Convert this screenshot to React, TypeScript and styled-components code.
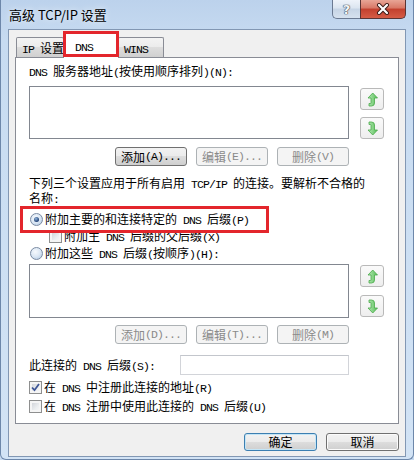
import React from 'react';
import styled, { createGlobalStyle } from 'styled-components';

const GlobalStyle = createGlobalStyle`
  html, body {
    margin: 0;
    padding: 0;
  }
  body {
    width: 414px;
    height: 460px;
    overflow: hidden;
    background: #c6daf0;
    font-family: "Noto Sans CJK SC", sans-serif;
    font-size: 12px;
    color: #000;
  }
`;

const Window = styled.div`
  box-sizing: border-box;
  width: 414px;
  height: 460px;
  display: flex;
  flex-direction: column;
  padding: 0 7px 8px 7px;
  border: 1px solid #6d87aa;
  border-top: none;
  border-radius: 0 0 6px 6px;
  background: linear-gradient(to bottom, #bcd2ec 0, #c7dbf1 40px, #d2e3f5 100%);
`;

const TitleBar = styled.div`
  flex: none;
  height: 29px;
  display: flex;
  align-items: flex-start;
`;

const Title = styled.div`
  margin: 7px 0 0 1px;
  font-size: 13px;
  line-height: 16px;
  text-shadow: 0 0 6px rgba(255, 255, 255, 0.9);
`;

const Caption = styled.div`
  margin-left: auto;
  display: flex;
`;

const HelpButton = styled.div`
  box-sizing: border-box;
  width: 28px;
  height: 19px;
  display: flex;
  align-items: center;
  justify-content: center;
  border: 1px solid #6b7a92;
  border-top: none;
  border-right: none;
  border-radius: 0 0 0 5px;
  background: linear-gradient(to bottom, #eef3fa 0, #dbe5f0 45%, #c6d4e5 50%, #d6e2ef 100%);
  color: #f4f6f8;
  font-family: "DejaVu Sans", sans-serif;
  font-weight: bold;
  font-size: 13px;
  text-shadow: 0 0 1px #3b4250, 0 0 1px #3b4250, 0 0 1px #3b4250;
`;

const CloseButton = styled.div`
  box-sizing: border-box;
  width: 46px;
  height: 19px;
  display: flex;
  align-items: center;
  justify-content: center;
  border: 1px solid #5a3535;
  border-top: none;
  border-radius: 0 0 5px 0;
  background: linear-gradient(to bottom, #e8a596 0, #d87866 45%, #c2402e 50%, #d55c46 100%);
`;

const Client = styled.div`
  flex: 1;
  display: flex;
  flex-direction: column;
  padding: 3px 6px 5px 6px;
  border: 1px solid #8297b3;
  background: #f0f0f0;
`;

const TabStrip = styled.div`
  flex: none;
  height: 24px;
  display: flex;
  align-items: flex-end;
  padding-left: 1px;
`;

const Tab = styled.div<{ $active?: boolean; $w: number }>`
  box-sizing: border-box;
  position: relative;
  width: ${(p) => p.$w}px;
  height: ${(p) => (p.$active ? 25 : 20)}px;
  margin-left: -1px;
  margin-bottom: ${(p) => (p.$active ? -1 : 0)}px;
  padding: ${(p) => (p.$active ? '5px 0 0 11px' : '3px 0 0 5px')};
  border: 1px solid #898c95;
  border-bottom: none;
  border-radius: 2px 2px 0 0;
  line-height: 13px;
  white-space: nowrap;
  z-index: ${(p) => (p.$active ? 2 : 0)};
  background: ${(p) =>
    p.$active ? '#fff' : 'linear-gradient(to bottom, #f3f3f3 0, #ebebeb 50%, #dddddd 50%, #d0d0d0 100%)'};

  &:first-child {
    margin-left: 0;
  }
`;

const Marker = styled.div<{ $l: number; $t: number; $w: number; $h: number }>`
  position: absolute;
  box-sizing: border-box;
  left: ${(p) => p.$l}px;
  top: ${(p) => p.$t}px;
  width: ${(p) => p.$w}px;
  height: ${(p) => p.$h}px;
  border: 3px solid #e3262c;
  z-index: 5;
  pointer-events: none;
`;

const Panel = styled.div`
  flex: none;
  display: flex;
  flex-direction: column;
  padding: 6px 14px 7px 13px;
  border: 1px solid #898c95;
  background: #fff;
`;

const Line = styled.div<{ $mt?: number }>`
  flex: none;
  margin-top: ${(p) => p.$mt || 0}px;
  line-height: 13px;
  white-space: nowrap;
`;

const ListRow = styled.div<{ $mt: number }>`
  flex: none;
  display: flex;
  align-items: flex-start;
  gap: 11px;
  margin-top: ${(p) => p.$mt}px;
`;

const ListBox = styled.div<{ $h: number }>`
  box-sizing: border-box;
  width: 320px;
  height: ${(p) => p.$h}px;
  border: 1px solid #828790;
  background: #fff;
`;

const MoveColumn = styled.div<{ $pt: number; $gap: number }>`
  display: flex;
  flex-direction: column;
  gap: ${(p) => p.$gap}px;
  padding-top: ${(p) => p.$pt}px;
`;

const MoveButton = styled.div`
  box-sizing: border-box;
  width: 24px;
  height: 22px;
  display: flex;
  align-items: center;
  justify-content: center;
  border: 1px solid #b9b9b9;
  border-radius: 3px;
  background: linear-gradient(to bottom, #fafafa, #eeeeee);
`;

const ButtonRow = styled.div<{ $mt: number }>`
  flex: none;
  width: 320px;
  display: flex;
  justify-content: flex-end;
  gap: 9px;
  margin-top: ${(p) => p.$mt}px;
`;

const SmallButton = styled.div<{ $disabled?: boolean }>`
  box-sizing: border-box;
  width: 72px;
  height: 19px;
  display: flex;
  align-items: center;
  justify-content: center;
  border: 1px solid ${(p) => (p.$disabled ? '#adb2b5' : '#707070')};
  border-radius: 3px;
  line-height: 13px;
  white-space: nowrap;
  color: ${(p) => (p.$disabled ? '#8a8a8a' : '#000')};
  background: ${(p) =>
    p.$disabled
      ? '#f4f4f4'
      : 'linear-gradient(to bottom, #f2f2f2 0, #ebebeb 50%, #dddddd 50%, #cfcfcf 100%)'};
`;

const OptionRow = styled.div<{ $mt?: number; $h?: number; $indent?: number }>`
  flex: none;
  position: relative;
  height: ${(p) => p.$h || 17}px;
  margin-top: ${(p) => p.$mt || 0}px;
  padding-left: ${(p) => p.$indent || 0}px;
  display: flex;
  align-items: center;
  gap: 2px;
  line-height: 13px;
  white-space: nowrap;
`;

const Radio = styled.span<{ $on?: boolean }>`
  box-sizing: border-box;
  flex: none;
  width: 13px;
  height: 13px;
  margin-left: 1px;
  display: flex;
  align-items: center;
  justify-content: center;
  border: 1px solid #7b8ba3;
  border-radius: 50%;
  background: radial-gradient(circle at 40% 35%, #f6f9fd 0, #dbe7f4 50%, #a9c3e0 100%);

  &::after {
    content: '';
    display: ${(p) => (p.$on ? 'block' : 'none')};
    width: 5px;
    height: 5px;
    border-radius: 50%;
    background: radial-gradient(circle at 40% 35%, #8fb4dc 0, #1f3f73 70%);
  }
`;

const Check = styled.span<{ $faint?: boolean }>`
  box-sizing: border-box;
  flex: none;
  width: 13px;
  height: 13px;
  display: flex;
  align-items: center;
  justify-content: center;
  border: 1px solid ${(p) => (p.$faint ? '#a9a9a9' : '#8e8f8f')};
  background: linear-gradient(135deg, #c8ccd2 0, #eceef0 60%, #fbfbfb 100%);
  box-shadow: inset 0 0 0 2px #f5f5f5;
`;

const SuffixRow = styled.div`
  flex: none;
  display: flex;
  align-items: center;
  margin-top: 11px;
  height: 20px;
  line-height: 13px;
  white-space: nowrap;
`;

const SuffixLabel = styled.span`
  width: 151px;
`;

const TextField = styled.div`
  box-sizing: border-box;
  width: 169px;
  height: 20px;
  border: 1px solid #d2d4d9;
  border-top-color: #c3c6cc;
  background: #fff;
`;

const BottomBar = styled.div`
  flex: none;
  display: flex;
  justify-content: flex-end;
  gap: 9px;
  margin-top: 9px;
`;

const DialogButton = styled.div<{ $default?: boolean }>`
  box-sizing: border-box;
  width: 73px;
  height: 18px;
  display: flex;
  align-items: center;
  justify-content: center;
  border: 1px solid ${(p) => (p.$default ? '#3c7fb1' : '#707070')};
  border-radius: 3px;
  font-size: 12px;
  line-height: 14px;
  background: linear-gradient(to bottom, #f2f2f2 0, #ebebeb 50%, #dddddd 50%, #cfcfcf 100%);
  box-shadow: ${(p) => (p.$default ? 'inset 0 0 0 1px #c4e5f6' : 'inset 0 0 0 1px #fbfbfb')};
`;

const Latin = styled.span`
  font-family: "Liberation Mono", "Courier New", monospace;
  font-size: 11.5px;
  letter-spacing: -0.9px;
`;

const Mixed: React.FC<{ text: string }> = ({ text }) => (
  <>
    {text
      .split(/([\x20-\x7e]+)/)
      .filter(Boolean)
      .map((part, i) =>
        /^[\x20-\x7e]+$/.test(part) ? (
          <Latin key={i}>{part}</Latin>
        ) : (
          <React.Fragment key={i}>{part}</React.Fragment>
        ),
      )}
  </>
);

const ArrowIcon: React.FC<{ down?: boolean }> = ({ down }) => {
  const id = down ? 'gd' : 'gu';
  const d = down
    ? 'M6.75 14 L11.5 9 L8.5 9 L8.5 4 Q8.5 1 5.5 1 L3 1 L3 3.5 L4.5 3.5 Q5 3.5 5 4 L5 9 L2 9 Z'
    : 'M6.75 1 L11.5 6 L8.5 6 L8.5 11 Q8.5 14 5.5 14 L3 14 L3 11.5 L4.5 11.5 Q5 11.5 5 11 L5 6 L2 6 Z';
  return (
    <svg width="13" height="15" viewBox="0 0 13 15">
      <defs>
        <linearGradient id={id} x1="0" y1="0" x2="1" y2="0">
          <stop offset="0" stopColor="#b4e8b4" />
          <stop offset="1" stopColor="#58bf58" />
        </linearGradient>
      </defs>
      <path d={d} fill={`url(#${id})`} stroke="#49a949" strokeWidth="0.8" strokeLinejoin="round" />
    </svg>
  );
};

const CheckMark = () => (
  <svg width="9" height="9" viewBox="0 0 9 9">
    <path d="M1 4.5 L3.5 7.2 L8 1" fill="none" stroke="#3d5596" strokeWidth="1.8" />
  </svg>
);

const CloseGlyph = () => (
  <svg width="14" height="12" viewBox="0 0 14 12">
    <path d="M3 2 L11 10 M11 2 L3 10" stroke="#3a1a16" strokeWidth="4" strokeLinecap="round" />
    <path d="M3 2 L11 10 M11 2 L3 10" stroke="#fff" strokeWidth="2.2" strokeLinecap="round" />
  </svg>
);

const App: React.FC = () => (
  <>
    <GlobalStyle />
    <Window>
      <TitleBar>
        <Title>高级 TCP/IP 设置</Title>
        <Caption>
          <HelpButton>?</HelpButton>
          <CloseButton>
            <CloseGlyph />
          </CloseButton>
        </Caption>
      </TitleBar>
      <Client>
        <TabStrip>
          <Tab $w={48}>
            <Mixed text="IP 设置" />
          </Tab>
          <Tab $w={56} $active>
            <Mixed text="DNS" />
            <Marker $l={-1} $t={-3} $w={56} $h={26} />
          </Tab>
          <Tab $w={46}>
            <Mixed text="WINS" />
          </Tab>
        </TabStrip>
        <Panel>
          <Line>
            <Mixed text="DNS 服务器地址(按使用顺序排列)(N):" />
          </Line>
          <ListRow $mt={7}>
            <ListBox $h={53} />
            <MoveColumn $pt={2} $gap={7}>
              <MoveButton>
                <ArrowIcon />
              </MoveButton>
              <MoveButton>
                <ArrowIcon down />
              </MoveButton>
            </MoveColumn>
          </ListRow>
          <ButtonRow $mt={8}>
            <SmallButton>
              <Mixed text="添加(A)..." />
            </SmallButton>
            <SmallButton $disabled>
              <Mixed text="编辑(E)..." />
            </SmallButton>
            <SmallButton $disabled>
              <Mixed text="删除(V)" />
            </SmallButton>
          </ButtonRow>
          <Line $mt={10}>
            <Mixed text="下列三个设置应用于所有启用 TCP/IP 的连接。要解析不合格的" />
            <br />
            <Mixed text="名称:" />
          </Line>
          <OptionRow $mt={5}>
            <Radio $on />
            <span>
              <Mixed text="附加主要的和连接特定的 DNS 后缀(P)" />
            </span>
            <Marker $l={-9} $t={-5} $w={249} $h={27} />
          </OptionRow>
          <OptionRow $indent={20}>
            <Check />
            <span>
              <Mixed text="附加主 DNS 后缀的父后缀(X)" />
            </span>
          </OptionRow>
          <OptionRow>
            <Radio />
            <span>
              <Mixed text="附加这些 DNS 后缀(按顺序)(H):" />
            </span>
          </OptionRow>
          <ListRow $mt={2}>
            <ListBox $h={54} />
            <MoveColumn $pt={1} $gap={8}>
              <MoveButton>
                <ArrowIcon />
              </MoveButton>
              <MoveButton>
                <ArrowIcon down />
              </MoveButton>
            </MoveColumn>
          </ListRow>
          <ButtonRow $mt={7}>
            <SmallButton $disabled>
              <Mixed text="添加(D)..." />
            </SmallButton>
            <SmallButton $disabled>
              <Mixed text="编辑(T)..." />
            </SmallButton>
            <SmallButton $disabled>
              <Mixed text="删除(M)" />
            </SmallButton>
          </ButtonRow>
          <SuffixRow>
            <SuffixLabel>
              <Mixed text="此连接的 DNS 后缀(S):" />
            </SuffixLabel>
            <TextField />
          </SuffixRow>
          <OptionRow $mt={3} $h={19}>
            <Check>
              <CheckMark />
            </Check>
            <span>
              <Mixed text="在 DNS 中注册此连接的地址(R)" />
            </span>
          </OptionRow>
          <OptionRow $h={19}>
            <Check />
            <span>
              <Mixed text="在 DNS 注册中使用此连接的 DNS 后缀(U)" />
            </span>
          </OptionRow>
        </Panel>
        <BottomBar>
          <DialogButton $default>确定</DialogButton>
          <DialogButton>取消</DialogButton>
        </BottomBar>
      </Client>
    </Window>
  </>
);

export default App;
